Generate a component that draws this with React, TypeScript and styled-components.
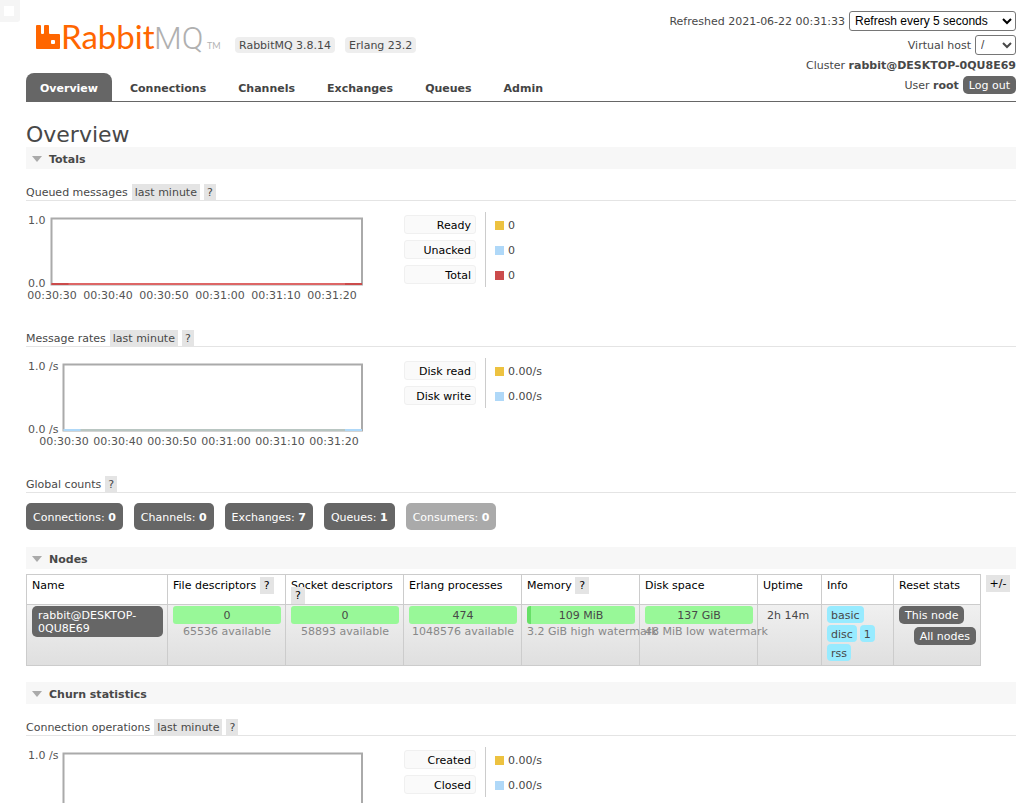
import React from "react";
import styled, { createGlobalStyle } from "styled-components";

const GlobalStyle = createGlobalStyle`
  * { box-sizing: border-box; }
  body {
    margin: 0;
    background: #fff;
    color: #484848;
    font: 11px/13px Verdana, "DejaVu Sans", sans-serif;
  }
  button { font: inherit; }
`;

const Page = styled.div`
  position: relative;
  height: 100vh;
  overflow: hidden;
  padding: 11px 20px 0 26px;
`;

const CornerMark = styled.div`
  position: absolute;
  top: 0;
  left: 0;
  width: 20px;
  height: 22px;
  border: solid #f5f5f5;
  border-width: 6px 6px 6px 4px;
  border-radius: 0 0 3px 0;
`;

const Header = styled.header`
  display: grid;
  grid-template-columns: 1fr auto;
  border-bottom: 1px solid #666;
  height: 91px;
`;

const Brand = styled.div`
  display: flex;
  flex-direction: column;
  justify-content: space-between;
`;

const BrandRow = styled.div`
  display: flex;
  align-items: flex-end;
  padding: 7px 0 0 9px;
`;

const Chips = styled.div`
  display: flex;
  gap: 10px;
  margin-left: 11px;
`;

const Chip = styled.span`
  padding: 2px 4px 1px;
  background: #eee;
  border-radius: 4px;
`;

const Tabs = styled.nav`
  display: flex;
  gap: 4px;
`;

const Tab = styled.a<{ $active?: boolean }>`
  padding: 9px 14px 6px;
  border-radius: 8px 8px 0 0;
  font-weight: bold;
  text-decoration: none;
  color: ${(p) => (p.$active ? "#fff" : "#444")};
  background: ${(p) => (p.$active ? "#666" : "transparent")};
`;

const Status = styled.div`
  display: flex;
  flex-direction: column;
  align-items: flex-end;
  gap: 4px;
`;

const StatusRow = styled.div`
  display: flex;
  align-items: center;
  gap: 4px;
`;

const Select = styled.select<{ $dim?: boolean }>`
  height: 20px;
  width: ${(p) => (p.$dim ? 41 : 167)}px;
  padding: 0 1px;
  border: 1px solid #767676;
  border-radius: 3px;
  background: #fff;
  color: ${(p) => (p.$dim ? "#484848" : "#000")};
  font: 12px "Liberation Sans", Arial, sans-serif;
`;

const DarkButton = styled.button`
  padding: 3px 6px 2px;
  border: 0;
  border-radius: 5px;
  background: #666;
  color: #fff;
`;

const Title = styled.h1`
  margin: 20px 0 0;
  font-size: 22px;
  line-height: 25px;
  font-weight: normal;
`;

const SectionBar = styled.h2<{ $gap?: boolean }>`
  display: flex;
  align-items: center;
  gap: 7px;
  height: 22px;
  margin: ${(p) => (p.$gap ? 16 : 0)}px 0 0;
  padding: 2px 0 0 6px;
  background: #f7f7f7;
  font-size: 11px;
  font-weight: bold;
`;

const Heading = styled.h3<{ $first?: boolean }>`
  display: flex;
  align-items: flex-end;
  gap: 4px;
  height: 17px;
  margin: ${(p) => (p.$first ? 15 : 0)}px 0 0;
  border-bottom: 1px solid #e4e4e4;
  font-size: 11px;
  line-height: 14px;
  font-weight: normal;
`;

const Tag = styled.button`
  height: 16px;
  padding: 0 3px;
  border: 0;
  background: #e4e4e4;
  color: #484848;
  line-height: 18px;
`;

const ChartRow = styled.div`
  display: flex;
  align-items: flex-start;
  height: 129px;
  padding-top: 11px;
`;

const ChartSvg = styled.svg`
  display: block;
  width: 352px;
  height: 95px;
  flex: none;
  margin-right: 26px;
  font-size: 11px;
  fill: #545454;
`;

const Legend = styled.table`
  border-collapse: collapse;

  th {
    height: 25px;
    padding: 0 9px 0 0;
    border-right: 1px solid #ccc;
  }
  td {
    padding: 1px 0 0 9px;
  }
`;

const LegendLabel = styled.a`
  display: block;
  width: 72px;
  padding: 3px 4px 1px;
  border: 1px solid #f0f0f0;
  border-radius: 3px;
  background: #fafafa;
  color: #000;
  font-weight: normal;
  text-align: right;
  text-decoration: none;
`;

const LegendValue = styled.div`
  display: flex;
  align-items: center;
  gap: 4px;
`;

const Swatch = styled.span<{ $color: string }>`
  width: 9px;
  height: 9px;
  background: ${(p) => p.$color};
`;

const Counts = styled.div`
  display: flex;
  gap: 11px;
  padding: 10px 0 1px;
`;

const Count = styled.button<{ $off?: boolean }>`
  height: 27px;
  padding: 2px 7px 0;
  border: 0;
  border-radius: 5px;
  background: ${(p) => (p.$off ? "#aaa" : "#666")};
  color: #fff;
`;

const NodesRow = styled.div`
  display: flex;
  align-items: flex-start;
  gap: 5px;
  padding: 5px 6px 0 0;
`;

const ColumnsButton = styled(Tag)`
  margin-top: 1px;
  width: 25px;
  height: 17px;
  color: #000;
`;

const NodeTable = styled.table`
  flex: 1;
  width: 0;
  table-layout: fixed;
  border-collapse: collapse;

  th, td {
    border: 1px solid #ccc;
    text-align: left;
    vertical-align: top;
    font-weight: normal;
  }
  th {
    height: 30px;
    padding: 6px 5px 2px;
    color: #000;
    line-height: 10px;
  }
  td {
    height: 61px;
    padding: 1px 4px 2px 5px;
  }
  tbody tr {
    background: linear-gradient(#f0f0f0, #dfdfdf);
  }
`;

const Help = styled.a`
  padding: 2px 4px;
  background: #e4e4e4;
  color: #000;
  text-decoration: none;
`;

const NodeLink = styled.a`
  display: block;
  padding: 3px 5px 2px 6px;
  border-radius: 5px;
  background: #666;
  color: #fff;
  text-decoration: none;
`;

const Bar = styled.div<{ $used?: boolean }>`
  height: 18px;
  border-radius: 3px;
  background: ${(p) =>
    p.$used ? "linear-gradient(90deg, #67e067 4px, #98f898 4px)" : "#98f898"};
  line-height: 20px;
  text-align: center;
`;

const Sub = styled.div`
  display: flex;
  justify-content: safe center;
  padding-top: 1px;
  color: #888;
  white-space: nowrap;
`;

const Uptime = styled.div`
  padding: 3px 0 0 4px;
`;

const Badges = styled.div`
  display: flex;
  flex-wrap: wrap;
  gap: 2px 3px;
`;

const Badge = styled.abbr`
  height: 17px;
  padding: 3px 4px 1px;
  border-radius: 4px;
  background: #98ebff;
`;

const ResetButtons = styled.div`
  display: flex;
  flex-direction: column;
  align-items: flex-start;
  gap: 3px;

  button:last-child { align-self: flex-end; }
`;

function Logo() {
  return (
    <svg width="189" height="35" viewBox="0 0 189 35" role="img" aria-label="RabbitMQ">
      <path
        fill="#f60"
        fillRule="evenodd"
        d="M2 7h3q1 0 1 1v7q0 1 1 1h1q1 0 1-1V8q0-1 1-1h3q1 0 1 1v7q0 1 1 1h9q1 0 1 1v13q0 1-1 1H2q-1 0-1-1V8q0-1 1-1zM16 23v2q0 1 1 1h2q1 0 1-1v-2q0-1-1-1h-2q-1 0-1 1z"
      />
      <text x="26" y="31" fontFamily="Lato" fontSize="33" fill="#f60">Rabbit</text>
      <text x="119" y="31" fontFamily="Roboto" fontWeight="300" fontSize="32" fill="#b0b0b0">MQ</text>
      <text x="172" y="31" fontFamily="Lato" fontSize="9" fill="#b3b3b3">TM</text>
    </svg>
  );
}

const Arrow = () => (
  <svg width="10" height="6" viewBox="0 0 10 6" aria-hidden="true">
    <path d="M0 0h10L5 6z" fill="#aaa" />
  </svg>
);

const TIMES = ["00:30:30", "00:30:40", "00:30:50", "00:31:00", "00:31:10", "00:31:20"];

function Chart({ unit = "", color, base }: { unit?: string; color: string; base: string }) {
  const left = unit ? 37.5 : 25.5;
  const step = unit ? 54 : 56;
  const right = 336;
  return (
    <ChartSvg viewBox="0 0 352 95">
      <text x="2" y="12">{"1.0" + unit}</text>
      <text x="2" y="75">{"0.0" + unit}</text>
      <rect x={left} y="6.5" width={right - left} height="66" fill="none" stroke="#aaa" strokeWidth="2" />
      <path d={`M${left} 72H${right}`} stroke={base} strokeWidth="2" />
      <path d={`M${left} 72h17M${right - 17} 72h17`} stroke={color} strokeWidth="2" />
      {TIMES.map((t, i) => (
        <text key={t} x={left + 0.5 + i * step} y="87" textAnchor="middle">{t}</text>
      ))}
    </ChartSvg>
  );
}

const COLORS = ["#edc240", "#afd8f8", "#cb4b4b"];

function ChartBlock(props: { unit?: string; color: string; base: string; items: [string, string][] }) {
  return (
    <ChartRow>
      <Chart unit={props.unit} color={props.color} base={props.base} />
      <Legend>
        <tbody>
          {props.items.map(([label, value], i) => (
            <tr key={label}>
              <th scope="row"><LegendLabel href="#">{label}</LegendLabel></th>
              <td><LegendValue><Swatch $color={COLORS[i]} />{value}</LegendValue></td>
            </tr>
          ))}
        </tbody>
      </Legend>
    </ChartRow>
  );
}

function SubHeading({ text, range, first }: { text: string; range?: boolean; first?: boolean }) {
  return (
    <Heading $first={first}>
      <span>{text}</span>
      {range && <Tag>last minute</Tag>}
      <Tag>?</Tag>
    </Heading>
  );
}

const COUNTS: [string, number][] = [
  ["Connections", 0], ["Channels", 0], ["Exchanges", 7], ["Queues", 1], ["Consumers", 0],
];

const COLUMN_WIDTHS = [141, 118, 118, 118, 118, 118, 64, 72, 87];

export default function App() {
  return (
    <Page>
      <GlobalStyle />
      <CornerMark />
      <Header>
        <Brand>
          <BrandRow>
            <Logo />
            <Chips>
              <Chip>RabbitMQ 3.8.14</Chip>
              <Chip>Erlang 23.2</Chip>
            </Chips>
          </BrandRow>
          <Tabs>
            <Tab href="#" $active>Overview</Tab>
            {["Connections", "Channels", "Exchanges", "Queues", "Admin"].map((t) => (
              <Tab key={t} href="#">{t}</Tab>
            ))}
          </Tabs>
        </Brand>
        <Status>
          <StatusRow>
            <label htmlFor="refresh">Refreshed 2021-06-22 00:31:33</label>
            <Select id="refresh"><option>Refresh every 5 seconds</option></Select>
          </StatusRow>
          <StatusRow>
            <label htmlFor="vhost">Virtual host</label>
            <Select id="vhost" $dim><option>/</option></Select>
          </StatusRow>
          <StatusRow><span>Cluster <b>rabbit@DESKTOP-0QU8E69</b></span></StatusRow>
          <StatusRow>
            <span>User <b>root</b></span>
            <DarkButton>Log out</DarkButton>
          </StatusRow>
        </Status>
      </Header>

      <main>
        <Title>Overview</Title>
        <SectionBar><Arrow />Totals</SectionBar>
        <SubHeading first range text="Queued messages" />
        <ChartBlock color="#cb4b4b" base="#d66" items={[["Ready", "0"], ["Unacked", "0"], ["Total", "0"]]} />
        <SubHeading range text="Message rates" />
        <ChartBlock unit=" /s" color="#afd8f8" base="#b9c6c2" items={[["Disk read", "0.00/s"], ["Disk write", "0.00/s"]]} />
        <SubHeading text="Global counts" />
        <Counts>
          {COUNTS.map(([name, n]) => (
            <Count key={name} $off={name === "Consumers"}>{name}: <b>{n}</b></Count>
          ))}
        </Counts>

        <SectionBar $gap><Arrow />Nodes</SectionBar>
        <NodesRow>
          <NodeTable>
            <colgroup>
              {COLUMN_WIDTHS.map((w, i) => <col key={i} style={{ width: w }} />)}
            </colgroup>
            <thead>
              <tr>
                <th>Name</th>
                <th>File descriptors <Help href="#">?</Help></th>
                <th>Socket descriptors <Help href="#">?</Help></th>
                <th>Erlang processes</th>
                <th>Memory <Help href="#">?</Help></th>
                <th>Disk space</th>
                <th>Uptime</th>
                <th>Info</th>
                <th>Reset stats</th>
              </tr>
            </thead>
            <tbody>
              <tr>
                <td><NodeLink href="#">rabbit@DESKTOP-0QU8E69</NodeLink></td>
                <td><Bar>0</Bar><Sub>65536 available</Sub></td>
                <td><Bar>0</Bar><Sub>58893 available</Sub></td>
                <td><Bar>474</Bar><Sub>1048576 available</Sub></td>
                <td><Bar $used>109 MiB</Bar><Sub>3.2 GiB high watermark</Sub></td>
                <td><Bar>137 GiB</Bar><Sub>48 MiB low watermark</Sub></td>
                <td><Uptime>2h 14m</Uptime></td>
                <td>
                  <Badges>
                    <Badge>basic</Badge><Badge>disc</Badge><Badge>1</Badge><Badge>rss</Badge>
                  </Badges>
                </td>
                <td>
                  <ResetButtons>
                    <DarkButton>This node</DarkButton>
                    <DarkButton>All nodes</DarkButton>
                  </ResetButtons>
                </td>
              </tr>
            </tbody>
          </NodeTable>
          <ColumnsButton>+/-</ColumnsButton>
        </NodesRow>

        <SectionBar $gap><Arrow />Churn statistics</SectionBar>
        <SubHeading first range text="Connection operations" />
        <ChartBlock unit=" /s" color="#afd8f8" base="#b9c6c2" items={[["Created", "0.00/s"], ["Closed", "0.00/s"]]} />
      </main>
    </Page>
  );
}
